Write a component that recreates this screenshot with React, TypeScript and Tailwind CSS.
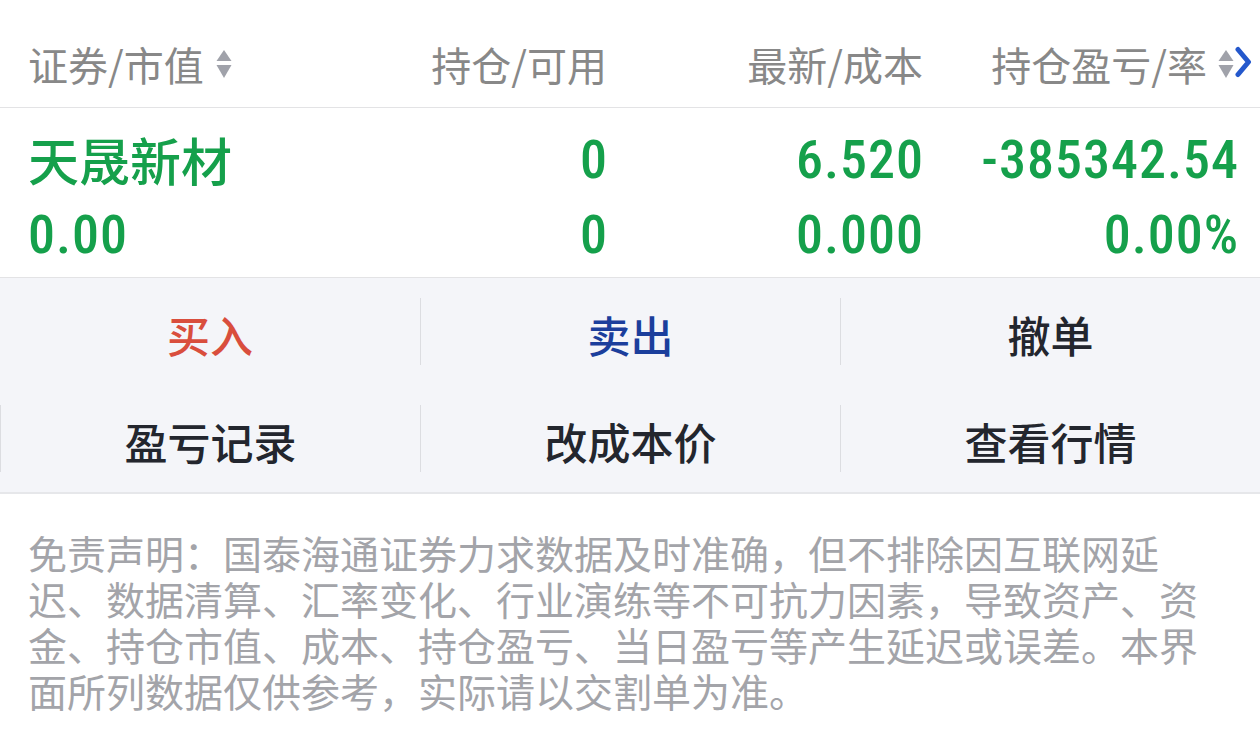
import React from "react";

const CJK = "font-['Noto_Sans_CJK_SC','Noto_Sans',sans-serif]";
const NUM = "font-['Roboto_Condensed','Roboto',sans-serif] text-[54px] leading-none font-medium tracking-[1px]";

function SortIcon() {
  return (
    <svg width="16" height="30" viewBox="0 0 16 30" className="block shrink-0 w-[16px] h-[30px]">
      <path d="M8 1 L15.5 12 L0.5 12 Z" fill="#a0a2aa" />
      <path d="M0.5 16 L15.5 16 L8 29 Z" fill="#a0a2aa" />
    </svg>
  );
}

function Chevron() {
  return (
    <svg width="18" height="32" viewBox="0 0 18 32" className="block w-[18px] h-[32px]">
      <path d="M4 3.5 L14.5 16 L4 28.5" fill="none" stroke="#2458cc" strokeWidth="5" strokeLinecap="round" strokeLinejoin="round" />
    </svg>
  );
}

export default function App() {
  const actions = [
    [
      { t: "买入", c: "text-[#d94e3d]" },
      { t: "卖出", c: "text-[#1b3e9c]" },
      { t: "撤单", c: "text-[#23262e]" },
    ],
    [
      { t: "盈亏记录", c: "text-[#23262e]" },
      { t: "改成本价", c: "text-[#23262e]" },
      { t: "查看行情", c: "text-[#23262e]" },
    ],
  ];
  return (
    <div className={`w-[1260px] h-[731px] bg-white overflow-hidden ${CJK}`}>
      {/* header */}
      <div className="relative h-[108px] border-b border-[#e3e3e5] pl-[28px] pr-[22px] pt-[20px]">
        <div className="grid grid-cols-[289px_290px_316px_1fr] items-center h-full text-[40px] leading-none text-[#888888]">
          <div className="flex items-center gap-[12px]">
            <span>证券/市值</span>
            <SortIcon />
          </div>
          <div className="text-right">持仓/可用</div>
          <div className="text-right">最新/成本</div>
          <div className="flex items-center justify-end gap-[11px] pr-[4px]">
            <span>持仓盈亏/率</span>
            <SortIcon />
          </div>
        </div>
        <div className="absolute right-[8px] top-[46px]">
          <Chevron />
        </div>
      </div>

      {/* data */}
      <div className="border-b border-[#e3e3e5] pl-[28px] pr-[22px] pt-[14px] pb-[5px] text-[#15a04b]">
        <div className="grid grid-cols-[289px_290px_316px_1fr] items-center h-[75px]">
          <div className={`text-[51px] leading-none font-medium ${CJK}`}>天晟新材</div>
          <div className={`text-right ${NUM} mr-[-1px]`}>0</div>
          <div className={`text-right ${NUM} mr-[-1px]`}>6.520</div>
          <div className={`text-right ${NUM} mr-[-1px]`}>-385342.54</div>
        </div>
        <div className="grid grid-cols-[289px_290px_316px_1fr] items-center h-[75px]">
          <div className={`${NUM}`}>0.00</div>
          <div className={`text-right ${NUM} mr-[-1px]`}>0</div>
          <div className={`text-right ${NUM} mr-[-1px]`}>0.000</div>
          <div className={`text-right ${NUM} mr-[-1px]`}>0.00%</div>
        </div>
      </div>

      {/* actions */}
      <div className="bg-[#f4f5f9] border-b-2 border-[#e6e7ea] pt-[20px] pb-[20px] flex flex-col gap-[40px]">
        {actions.map((row, ri) => (
          <div key={ri} className="grid grid-cols-3 h-[67px]">
            {row.map((a, i) => (
              <div
                key={a.t}
                className={`flex items-center justify-center pt-[6px] text-[43px] leading-none font-medium ${a.c} ${
                  i > 0 || ri === 1 ? "border-l border-[#dcdde1]" : ""
                }`}
              >
                {a.t}
              </div>
            ))}
          </div>
        ))}
      </div>

      {/* disclaimer */}
      <div className="pl-[28px] pr-[50px] pt-[35px] text-[39px] leading-[46px] text-[#a3a4a9]">
        免责声明：国泰海通证券力求数据及时准确，但不排除因互联网延迟、数据清算、汇率变化、行业演练等不可抗力因素，导致资产、资金、持仓市值、成本、持仓盈亏、当日盈亏等产生延迟或误差。本界面所列数据仅供参考，实际请以交割单为准。
      </div>
    </div>
  );
}
